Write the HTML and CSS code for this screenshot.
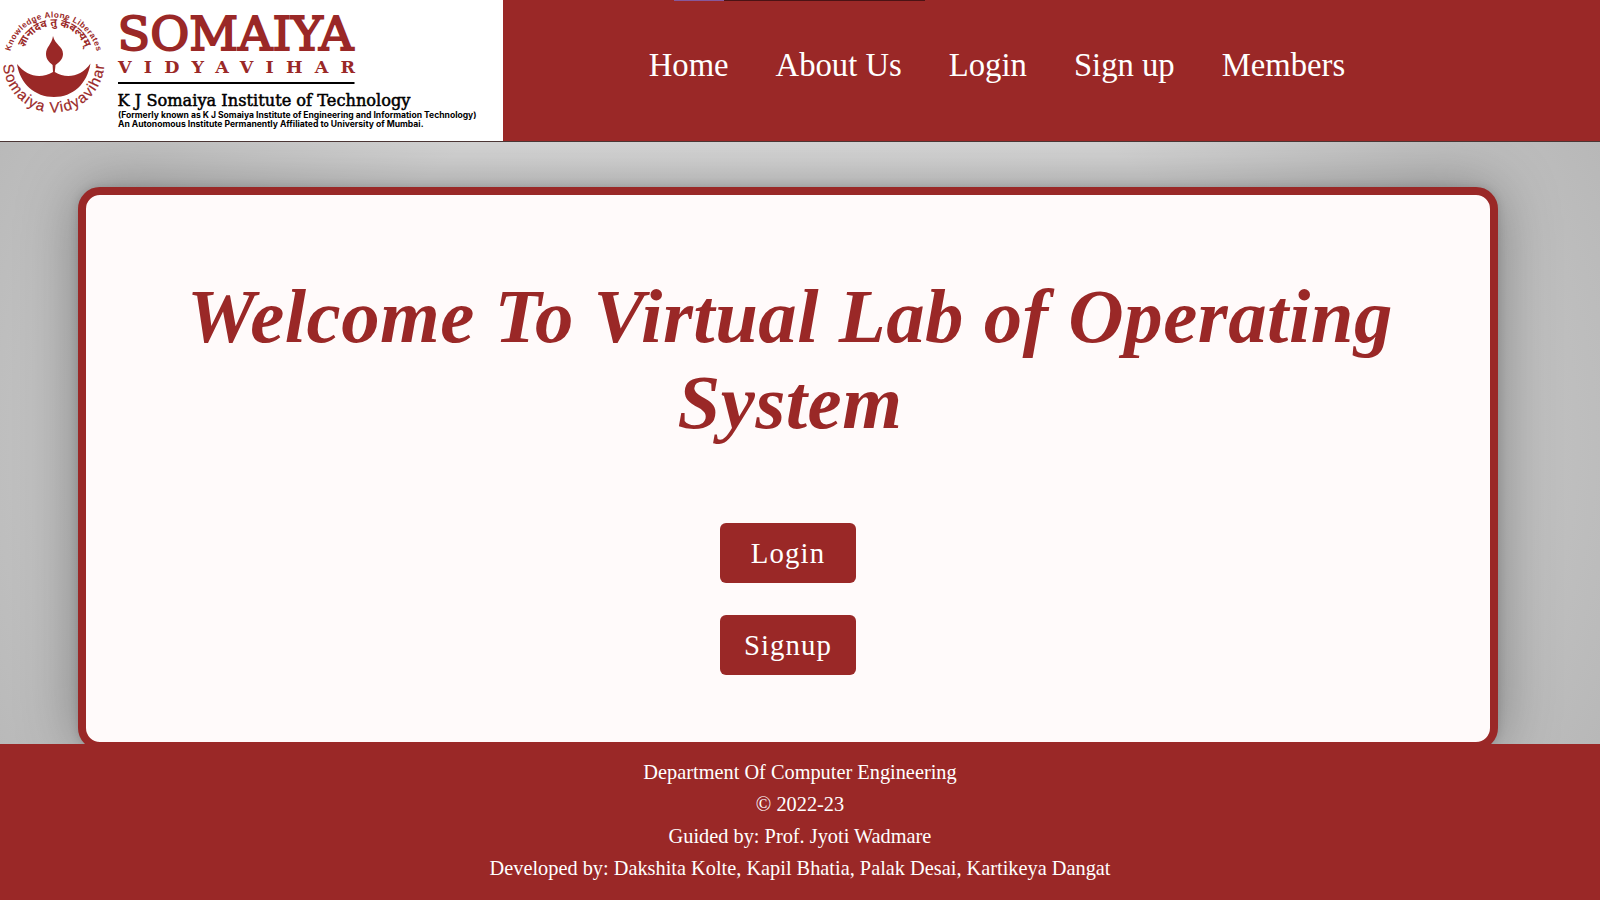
FILE: index.html
```html
<!DOCTYPE html>
<html lang="en">
<head>
<meta charset="utf-8">
<title>Virtual Lab of Operating System</title>
<link rel="stylesheet" href="styles.css">
</head>
<body>
<div class="page">
  <header class="header">
    <a class="brand" href="#">
      <svg class="logo" viewBox="0 0 502 140" width="502" height="140">
        <defs>
          <path id="arc-top" d="M9 62 A44.5 44.5 0 0 1 98 62"/>
          <path id="arc-mid" d="M22.5 58 A32 32 0 0 1 86.5 58"/>
          <path id="arc-bottom" d="M3.5 57 A50.5 50.5 0 1 0 104 57"/>
        </defs>
        <text class="motto" text-anchor="middle"><textPath href="#arc-top" startOffset="50%" textLength="118">Knowledge Alone Liberates</textPath></text>
        <text class="sanskrit" text-anchor="middle"><textPath href="#arc-mid" startOffset="50%">ज्ञानादेव तु कैवल्यम्</textPath></text>
        <text class="ring" text-anchor="middle"><textPath href="#arc-bottom" startOffset="50%" textLength="153">Somaiya Vidyavihar</textPath></text>
        <path class="emblem" d="M53 36 C55 45 63 46 63 54 C63 60 58 63 55.5 65 L54.8 72 C66 79 81 77 90.5 63.5 C87 84 73 97 54 97 C35 97 20 84 17 64 C27 77 41 79 53 72 L52.6 65 C49 62 46 59 46 54 C46 47 52 44 53 36Z"/>
        <text class="name" x="117.5" y="50.3" textLength="236" lengthAdjust="spacingAndGlyphs">SOMAIYA</text>
        <text class="sub" x="118" y="73" textLength="237">VIDYAVIHAR</text>
        <path class="rule" d="M118 83H354.5"/>
        <text class="institute" x="117.5" y="105.7" textLength="293" lengthAdjust="spacingAndGlyphs">K J Somaiya Institute of Technology</text>
        <text class="note" x="118" y="118" textLength="358.5" lengthAdjust="spacingAndGlyphs">(Formerly known as K J Somaiya Institute of Engineering and Information Technology)</text>
        <text class="note" x="118" y="126.7" textLength="305.5" lengthAdjust="spacingAndGlyphs">An Autonomous Institute Permanently Affiliated to University of Mumbai.</text>
      </svg>
    </a>
    <nav class="nav">
      <a href="#">Home</a><a href="#">About Us</a><a href="#">Login</a><a href="#">Sign up</a><a href="#">Members</a>
    </nav>
    <div class="strip"></div>
  </header>
  <main class="main">
    <section class="card">
      <h1 class="title">Welcome To Virtual Lab of Operating System</h1>
      <a class="button" href="#">Login</a>
      <a class="button" href="#">Signup</a>
    </section>
  </main>
  <footer class="footer">
    <p>Department Of Computer Engineering</p>
    <p>© 2022-23</p>
    <p>Guided by: Prof. Jyoti Wadmare</p>
    <p>Developed by: Dakshita Kolte, Kapil Bhatia, Palak Desai, Kartikeya Dangat</p>
  </footer>
</div>
</body>
</html>
```
FILE: styles.css
```css
* { box-sizing: border-box; }
body {
  margin: 0;
  font-family: "Liberation Serif", "Times New Roman", serif;
  color: #fff;
}
a { color: inherit; text-decoration: none; }
.page {
  height: 900px;
  display: flex;
  flex-direction: column;
  overflow: hidden;
}
.header {
  position: relative;
  display: flex;
  height: 142px;
  background: #9a2827;
  border-bottom: 1px solid #4b3635;
}
.brand { width: 502.5px; height: 141px; background: #fff; }
.logo { display: block; }
.motto { font: bold 8.2px "Liberation Sans", sans-serif; fill: #9a2827; }
.sanskrit { font: bold 10.6px "Noto Sans Devanagari", "Noto Sans", sans-serif; fill: #9a2827; }
.ring { font: 15px "Liberation Sans", sans-serif; fill: #9a2827; stroke: #9a2827; stroke-width: .2; }
.emblem { fill: #9a2827; }
.name { font: 47.5px "DejaVu Serif", serif; fill: #9a2827; stroke: #9a2827; stroke-width: 1.9; }
.sub { font: bold 17.5px "DejaVu Serif", serif; fill: #9a2827; }
.rule { stroke: #000; stroke-width: 2; }
.institute { font: 16.5px "DejaVu Serif", serif; fill: #000; stroke: #000; stroke-width: .5; }
.note { font: bold 8.3px Inter, sans-serif; fill: #000; }
.nav {
  display: flex;
  gap: 47px;
  padding: 46px 0 0 146.2px;
  font-size: 32.7px;
  line-height: 38px;
  white-space: nowrap;
}
.strip {
  position: absolute;
  top: 0;
  left: 674px;
  width: 251px;
  height: 1px;
  background: linear-gradient(90deg, #86589b 50px, #4b1214 50px);
}
.main {
  height: 602px;
  padding: 45px 0 0 78px;
  background: radial-gradient(ellipse 900px 700px at 785px 300px, #d8d8d8 0%, #d5d5d5 55%, #c2c2c2 80%, #b8b8b8 100%);
}
.card {
  width: 1420px;
  height: 563px;
  padding: 79px 30px 0;
  display: flex;
  flex-direction: column;
  align-items: center;
  background: #fffafa;
  border: 8px solid #9a2827;
  border-radius: 22px;
  box-shadow: 0 0 60px rgba(0, 0, 0, .34), 0 0 10px rgba(0, 0, 0, .15);
}
.title {
  margin: 0 0 77px;
  padding-left: 4px;
  color: #9a2827;
  font-size: 76.8px;
  line-height: 86px;
  font-style: italic;
  letter-spacing: .5px;
  text-align: center;
}
.button {
  width: 136px;
  height: 60px;
  margin-bottom: 32px;
  border-radius: 6px;
  background: #9a2827;
  font-size: 28.8px;
  line-height: 61px;
  letter-spacing: 1.1px;
  text-align: center;
}
.footer {
  position: relative;
  flex: 1;
  padding-top: 13px;
  background: #9a2827;
  text-align: center;
}
.footer p { margin: 0; font-size: 20.33px; line-height: 31.9px; }
```
